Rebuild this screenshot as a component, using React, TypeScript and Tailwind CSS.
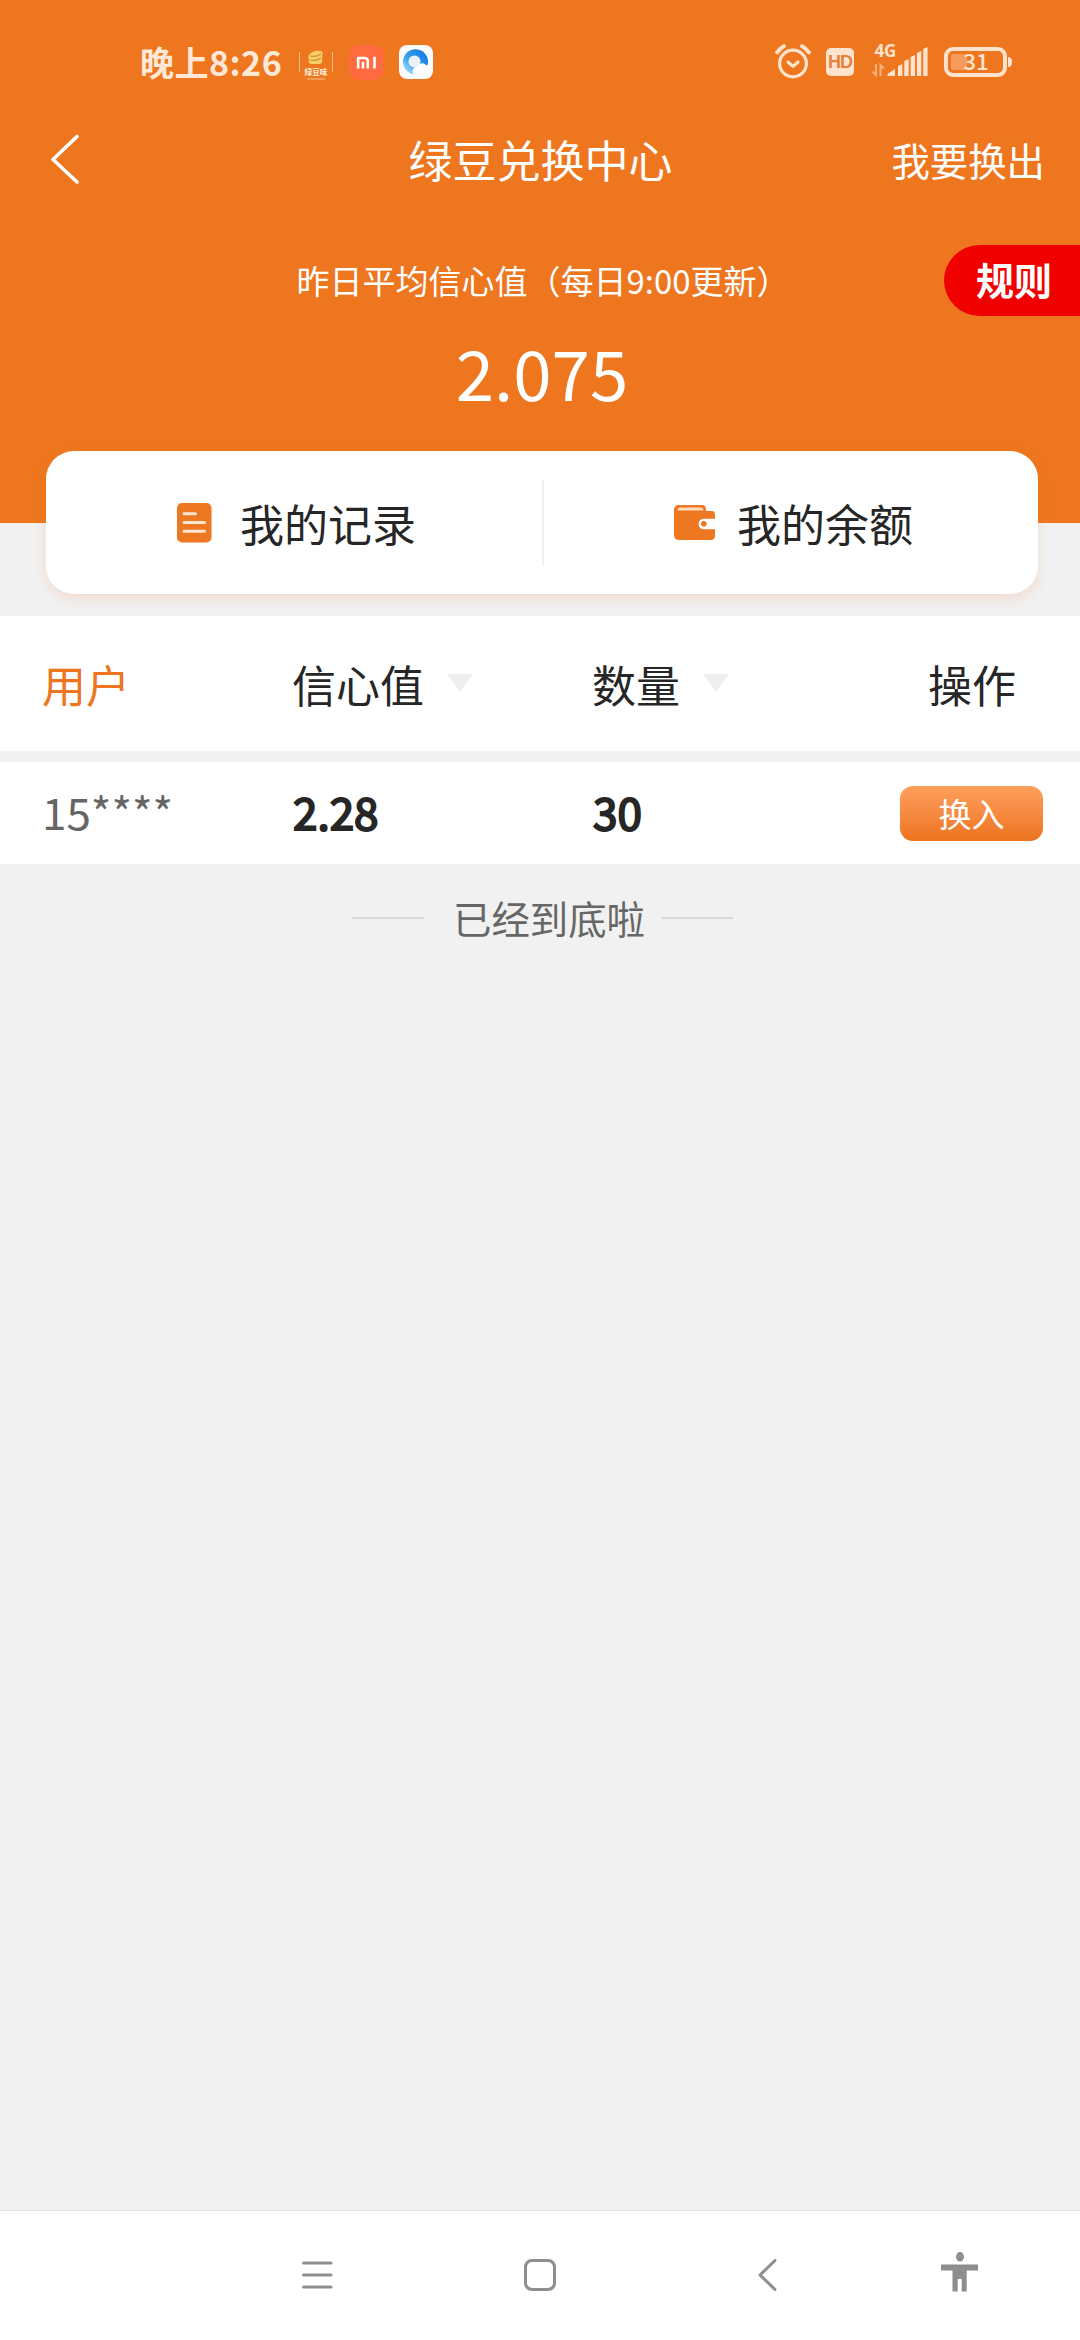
import { ReactNode } from 'react';

const records = [{ user: '15****', confidence: '2.28', amount: '30' }];

const BAR_HEIGHTS = [12, 17, 21, 25, 29];

function AlarmIcon() {
  return (
    <svg width="36" height="36" viewBox="0 0 36 36" fill="none" stroke="#ffe3cc" strokeLinecap="round">
      <circle cx="18" cy="19.5" r="13.4" strokeWidth="3.2" />
      <path d="M13 18l5 4.400 5-4.400" strokeWidth="3.2" strokeLinejoin="round" />
      <path d="M2.200 8.400C3.800 6 6 3.600 8.800 2.200M33.800 8.400C32.200 6 30 3.600 27.200 2.200" strokeWidth="4" />
    </svg>
  );
}

function SignalIcon() {
  return (
    <svg width="57" height="34" viewBox="0 0 57 34" className="overflow-visible">
      <text
        x="3.4"
        y="12.4"
        fontSize="17"
        fontWeight="700"
        fill="#ffe3cc"
        fontFamily="Open Sans, sans-serif"
      >
        4G
      </text>
      <path d="M5 19v11L1.500 26.500M9.500 31V20l3.200 3.500" fill="none" stroke="#f6b07c" strokeWidth="2" />
      <path d="M16.500 31v-2l7.500-5v7z" fill="#ffe3cc" />
      {BAR_HEIGHTS.map((h, i) => (
        <path key={h} d={`M${27 + i * 6.3} 31v-${h - 2}l4.4-2v${h}z`} fill="#ffe3cc" />
      ))}
    </svg>
  );
}

function BatteryIcon() {
  return (
    <svg width="70" height="32" viewBox="0 0 70 32" className="overflow-visible">
      <rect x="2" y="3" width="59" height="26" rx="7" fill="none" stroke="#ffe3cc" strokeWidth="4" />
      <rect x="7" y="8" width="16" height="16" rx="2.5" fill="#f69b5b" />
      <path d="M64 11c3 0 4 1.500 4 5s-1 5-4 5z" fill="#ffe3cc" />
      <text
        x="32"
        y="24.200"
        textAnchor="middle"
        fontSize="22.500"
        fontWeight="500"
        fill="#ffe3cc"
        fontFamily="Noto Sans CJK SC, sans-serif"
      >
        31
      </text>
    </svg>
  );
}

function StampIcon() {
  return (
    <svg width="34" height="36" viewBox="0 0 34 36" className="overflow-visible">
      <path d="M.5 8v20M33.500 8v20M8 35h18" stroke="#f7bd8c" strokeWidth="1" />
      <path d="M10 11c2-3 7-5 12-4 2 1 2 3 1 4 1 2 0 3 0 4 1 3-1 5-3 5H13c-3 0-4-2-3-4-1-2-1-4 0-5z" fill="#f5cf68" />
      <path d="M11 12c4 1 8 0 11-2M11 16c4 1 8 0 11-2" fill="none" stroke="#d58a2a" strokeWidth="1.200" />
      <text
        x="17"
        y="30.500"
        textAnchor="middle"
        fontSize="7.600"
        fontWeight="700"
        fill="#fff1dc"
        fontFamily="Noto Sans CJK SC, sans-serif"
      >
        绿豆味
      </text>
    </svg>
  );
}

function MiIcon() {
  return (
    <svg width="35" height="35" viewBox="0 0 35 35">
      <rect width="35" height="35" rx="10" fill="#ff6a3f" />
      <path
        d="M9.200 23.500V13h6.300c2.300 0 3.300 1 3.300 3.200v7.300M14 16.800v6.700M25.500 11.700v11.800"
        fill="none"
        stroke="#fff"
        strokeWidth="2.600"
      />
    </svg>
  );
}

function BrowserIcon() {
  return (
    <svg width="34" height="34" viewBox="0 0 34 34">
      <defs>
        <linearGradient id="swirl" x1="0" y1="1" x2="1" y2="0">
          <stop offset="0" stopColor="#d4f0fc" />
          <stop offset="0.4" stopColor="#35a5ee" />
          <stop offset="1" stopColor="#0b6fe0" />
        </linearGradient>
      </defs>
      <rect width="34" height="34" rx="8" fill="#fafcfe" />
      <circle cx="16.500" cy="16.800" r="12.600" fill="url(#swirl)" />
      <circle cx="15.500" cy="16.500" r="6" fill="#eaf0f6" />
      <path d="M15 29.800a4.600 4.600 0 0 1 2.800-8 5.600 5.600 0 0 1 9.400-1.600 4.800 4.800 0 0 1 2.300 9.600z" fill="#fafcfe" />
    </svg>
  );
}

function StatusBar() {
  return (
    <div className="flex h-[124px] items-center pr-[66px] pl-[140px]">
      <span className="w-[159px] text-[34px] leading-[34px] font-bold tracking-[0.5px] text-[#ffe8d6] whitespace-nowrap">
        晚上8:26
      </span>
      <div className="flex items-center gap-[15.5px]">
        <StampIcon />
        <MiIcon />
        <BrowserIcon />
      </div>
      <div className="ml-auto flex items-center">
        <AlarmIcon />
        <span className="ml-[15px] mr-[17px] flex h-7 w-7 items-center justify-center rounded-[5px] bg-[#ffe3cc] font-['Liberation_Sans',sans-serif] text-[18px] leading-none font-bold tracking-[-1px] text-[#e5813a]">
          HD
        </span>
        <SignalIcon />
        <span className="w-4" />
        <BatteryIcon />
      </div>
    </div>
  );
}

function RecordIcon() {
  return (
    <svg width="35" height="40" viewBox="0 0 35 40">
      <rect width="34.500" height="39.500" rx="5" fill="#ee7722" />
      <path d="M7 10.700h11.500M7 19.500h20.500M7 28.300h20.500" stroke="#ffe6d0" strokeWidth="3" strokeLinecap="round" />
    </svg>
  );
}

function WalletIcon() {
  return (
    <svg width="42" height="36" viewBox="0 0 42 36">
      <path
        d="M5 0h23.500c2 0 3 1.500 3.500 4v2h5.500c2.500 0 3.500 1.500 3.500 4v5H30.500a5 4.500 0 0 0 0 9H41v6.500c0 2.500-1.500 4.500-4 4.500H4.500C2 35 0 33 0 30.500V5c0-3 2-5 5-5z"
        fill="#ee7722"
      />
      <path d="M3.500 5.600c0-2.200 1-3.200 3-3.200h20c2 0 2.700 1.200 3 3.200z" fill="#ffdabb" />
      <path d="M29.800 13.800H42v10.400H29.800a5.200 5.200 0 0 1 0-10.400z" fill="#fff" />
      <circle cx="29.800" cy="18.800" r="2.800" fill="#ee7722" />
    </svg>
  );
}

function CardEntry({ icon, label }: { icon: ReactNode; label: string }) {
  return (
    <button className="flex flex-1 items-center">
      <span className="flex w-[63px]">{icon}</span>
      <span className="text-[44px] leading-[44px] text-[#262626]">{label}</span>
    </button>
  );
}

function SortArrow() {
  return (
    <svg width="26" height="18" viewBox="0 0 26 18" className="mb-px">
      <path d="M0 0h26L13 18z" fill="#efefef" />
    </svg>
  );
}

function NavBar() {
  return (
    <nav className="mt-auto flex h-[130px] items-center border-t border-[#e2e2e2] bg-white pl-[302px]">
      <svg width="31" height="34" viewBox="0 0 31 34" fill="none" stroke="#8e8e8e" strokeWidth="3" strokeLinecap="round">
        <path d="M1.500 4h27.500M1.500 16h27.500M1.500 28h27.500" />
      </svg>
      <svg width="33" height="34" viewBox="0 0 33 34" fill="none" className="ml-[191px]">
        <rect x="1.500" y="1.500" width="29" height="29" rx="6.500" stroke="#8e8e8e" strokeWidth="3" />
      </svg>
      <svg width="20" height="34" viewBox="0 0 20 34" fill="none" className="ml-[201px]">
        <path d="M17 1.500L2 16l15 14.500" stroke="#8e8e8e" strokeWidth="3" strokeLinecap="round" strokeLinejoin="round" />
      </svg>
      <svg width="37" height="40" viewBox="0 0 37 40" fill="#8e8e8e" className="mb-[8px] ml-[163px]">
        <ellipse cx="19" cy="4.800" rx="4" ry="4.800" />
        <path d="M0 12.500h37v6H25.700V39.500h-5V27h-4v12.500h-5.200V18.500H0z" />
      </svg>
    </nav>
  );
}

export default function App() {
  return (
    <div className="flex h-[2340px] w-[1080px] flex-col overflow-hidden bg-[#f1f1f1] font-['Noto_Sans_CJK_SC',sans-serif]">
      <header className="h-[523px] shrink-0 bg-[#ed761f] text-white">
        <StatusBar />

        <div className="grid h-[70px] grid-cols-3 items-center pr-[35px] pl-[50px]">
          <svg width="30" height="50" viewBox="0 0 30 50" fill="none">
            <path d="M27 2.500L3 25.500 27 48" stroke="#fff" strokeWidth="3.600" strokeLinecap="round" strokeLinejoin="round" />
          </svg>
          <h1 className="-ml-[14px] text-center text-[44px] leading-[44px] whitespace-nowrap">绿豆兑换中心</h1>
          <span className="text-right text-[38.4px] leading-[38px]">我要换出</span>
        </div>

        <div className="mt-[51px] grid h-[71px] grid-cols-[136px_1fr_136px] items-center">
          <span />
          <p className="pl-[6px] text-center text-[33px] leading-[33px] whitespace-nowrap">昨日平均信心值（每日9:00更新）</p>
          <span className="flex h-full items-center rounded-l-full bg-[#f10000] pb-[3px] pl-[32px] text-[38px] leading-[38px] font-bold">
            规则
          </span>
        </div>
        <p className="mt-[19px] pl-[4px] text-center text-[69px] leading-[72px]">2.075</p>
      </header>

      <section className="relative mr-[42px] ml-[46px] -mt-[72px] flex h-[143px] shrink-0 items-center rounded-[28px] bg-white shadow-[0_5px_12px_rgba(237,118,31,0.16)]">
        <div className="flex w-[496px] pl-[131px]">
          <CardEntry icon={<RecordIcon />} label="我的记录" />
        </div>
        <div className="h-[85px] w-[2px] bg-[#efefef]" />
        <div className="flex flex-1 pl-[130px]">
          <CardEntry icon={<WalletIcon />} label="我的余额" />
        </div>
      </section>

      <div className="mt-[22px] grid h-[135px] shrink-0 grid-cols-[250px_300px_1fr_auto] items-center bg-white pr-[64px] pl-[42px] text-[44px] leading-[44px] text-[#262626]">
        <span className="text-[#ed761f]">用户</span>
        <span className="flex items-center gap-[23px]">
          信心值
          <SortArrow />
        </span>
        <span className="flex items-center gap-[23px]">
          数量
          <SortArrow />
        </span>
        <span>操作</span>
      </div>

      {records.map((r) => (
        <div
          key={r.user}
          className="mt-[11px] grid h-[102px] shrink-0 grid-cols-[250px_300px_1fr_auto] items-center bg-white pr-[37px] pl-[42px] text-[44px] leading-[44px] text-[#262626]"
        >
          <span className="pb-[4px] text-[#666]">{r.user}</span>
          <span className="pb-[4px] pl-px [-webkit-text-stroke:2px_#262626]">{r.confidence}</span>
          <span className="pb-[4px] pl-px [-webkit-text-stroke:2px_#262626]">{r.amount}</span>
          <button className="flex h-[55px] w-[143px] items-center justify-center rounded-[13px] bg-gradient-to-b from-[#ff9f5c] to-[#ed731b] text-[33px] leading-[33px] text-white">
            换入
          </button>
        </div>
      ))}

      <div className="mt-[36px] flex items-center pl-[352px] text-[38.4px] leading-[38px] text-[#666]">
        <span className="h-[2px] w-[72px] bg-[#dadada]" />
        <span className="-mt-[2px] w-[237px] pl-[29px]">已经到底啦</span>
        <span className="h-[2px] w-[72px] bg-[#dadada]" />
      </div>

      <NavBar />
    </div>
  );
}
